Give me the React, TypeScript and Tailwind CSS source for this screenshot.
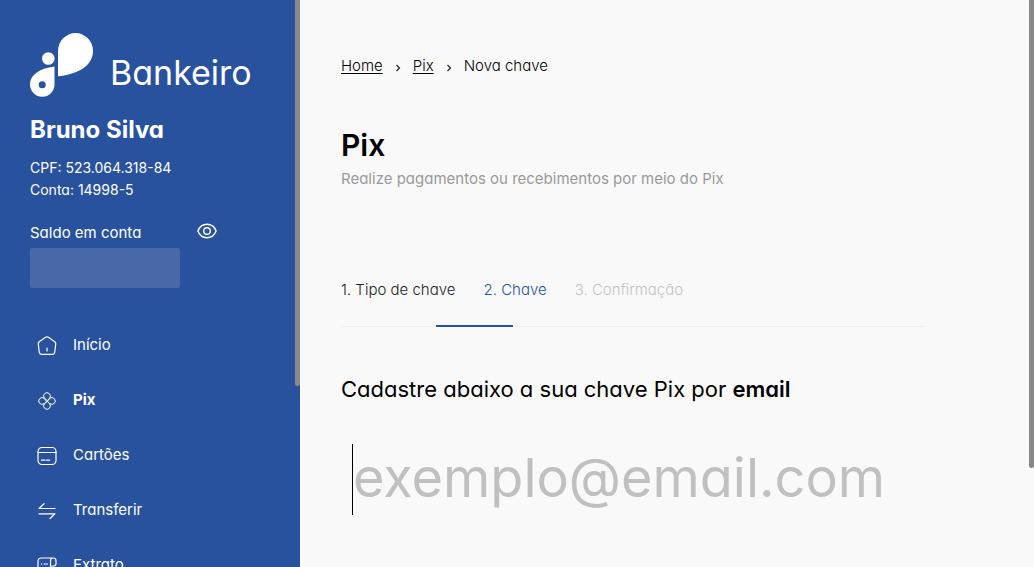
import type { ReactNode } from "react";

function Logo() {
  return (
    <svg width="64" height="66" viewBox="0 0 64 66" fill="#fff" aria-hidden="true">
      <path d="M28 44.300V19A17.500 18 0 0 1 63 19C63 33.500 48 42.500 28 44.300Z" />
      <circle cx="18.300" cy="26.500" r="6.300" />
      <path
        fillRule="evenodd"
        d="M24.500 34.500C9 36.500 0 43 0 52.500A12.250 12.250 0 0 0 24.500 52.500ZM12.200 49.200A3.500 3.500 0 1 1 12.200 56.200A3.500 3.500 0 1 1 12.200 49.200Z"
      />
    </svg>
  );
}

function Icon({ children }: { children: ReactNode }) {
  return (
    <svg
      width="20"
      height="20"
      viewBox="0 0 20 20"
      fill="none"
      stroke="#fff"
      strokeWidth="1.2"
      strokeLinecap="round"
      strokeLinejoin="round"
      className="shrink-0"
      aria-hidden="true"
    >
      {children}
    </svg>
  );
}

const menu = [
  {
    label: "Início",
    active: false,
    icon: (
      <>
        <path d="M8.600 1.300Q10 .4 11.400 1.300L17.800 5.800Q19 6.800 18.700 8.200L17.700 16.300Q17.200 18.400 15.100 18.400H4.900Q2.800 18.400 2.300 16.300L1.300 8.200Q1 6.800 2.200 5.800Z" />
        <path d="M10 12v3" />
      </>
    ),
  },
  {
    label: "Pix",
    active: true,
    icon: (
      <g strokeWidth="1">
        <path d="M10 9.300 7.300 7.200A3.400 3.400 0 1 1 12.700 7.200Z" />
        <path d="M10 10.700 7.300 12.800A3.400 3.400 0 1 0 12.700 12.800Z" />
        <path d="M9.300 10 7.200 7.300A3.400 3.400 0 1 0 7.200 12.700Z" />
        <path d="M10.700 10 12.800 7.300A3.400 3.400 0 1 1 12.800 12.700Z" />
      </g>
    ),
  },
  {
    label: "Cartões",
    active: false,
    icon: (
      <>
        <rect x="1" y="1.500" width="18" height="17" rx="4" />
        <path d="M1 6.500h18M4.500 14.200h3.500M9.500 14.200h3" />
      </>
    ),
  },
  {
    label: "Transferir",
    active: false,
    icon: <path d="M18 7.500H2L7 2.700M2 12.800h16L13 17.500" />,
  },
  {
    label: "Extrato",
    active: false,
    icon: (
      <>
        <path d="M13.500 18.500H5Q1 18.500 1 14.500V5.500Q1 2 4.500 2H16.500Q19 2 19 5V7.500Q19 10 16.500 10H13.500V4.500Q13.500 2 16 2M13.500 10v8.500" />
        <path d="M4.300 8h.5M7 8h3.500M4.300 11.500h.5M7 11.500h3.500" />
      </>
    ),
  },
];

function Sidebar() {
  return (
    <aside className="relative w-[300px] shrink-0 overflow-hidden bg-[#28529e] text-white">
      <div className="px-[30px] pt-8">
        <a href="#inicio" className="flex h-[66px] items-end gap-4" aria-label="Bankeiro">
          <Logo />
          <span className="text-[34px] leading-[50px]">Bankeiro</span>
        </a>
        <h2 className="mt-4 text-2xl leading-8 font-bold">Bruno Silva</h2>
        <p className="mt-[11px] text-sm leading-[22px]">CPF: 523.064.318-84</p>
        <p className="text-sm leading-[22px]">Conta: 14998-5</p>
        <div className="mt-5 flex items-start">
          <span className="w-[167px] text-[15px] leading-6">Saldo em conta</span>
          <button type="button" aria-label="Mostrar saldo">
            <svg width="20" height="20" viewBox="0 0 20 20" fill="none" stroke="#fff" strokeWidth="1.400" aria-hidden="true">
              <path d="M.9 10C2.600 5.600 6 3.300 10 3.300S17.400 5.600 19.100 10C17.400 14.400 14 16.700 10 16.700S2.600 14.400.9 10Z" />
              <circle cx="10" cy="10" r="3.300" />
            </svg>
          </button>
        </div>
        <div className="mt-[3px] h-10 w-[150px] rounded-xs bg-[#4868a7]" />
      </div>
      <nav className="mt-[30px] pl-[37px]">
        {menu.map((item) => (
          <a
            key={item.label}
            href={"#" + item.label.toLowerCase()}
            className={
              item.active
                ? "flex h-[55px] items-center gap-4 text-[15px] font-bold"
                : "flex h-[55px] items-center gap-4 text-[15px]"
            }
          >
            <Icon>{item.icon}</Icon>
            {item.label}
          </a>
        ))}
      </nav>
      <div className="absolute top-0 right-0 h-[386px] w-[5px] rounded-b-full bg-[#888]" />
    </aside>
  );
}

function Separator() {
  return (
    <svg width="6" height="8" viewBox="0 0 6 8" fill="none" stroke="#222" strokeWidth="1.200" className="mt-1" aria-hidden="true">
      <path d="M1.500 1l3 3-3 3" />
    </svg>
  );
}

export default function App() {
  return (
    <div className="relative flex h-screen overflow-hidden bg-[#f9f9f9] font-[Inter,sans-serif] text-black [font-feature-settings:'cv11']">
      <Sidebar />
      <main className="min-w-0 flex-1 pr-[109px] pl-[41px]">
        <nav aria-label="Trilha" className="flex items-center gap-3 pt-14 text-[15px] leading-5 font-light">
          <a href="#home" className="underline underline-offset-2">Home</a>
          <Separator />
          <a href="#pix" className="underline underline-offset-2">Pix</a>
          <Separator />
          <span>Nova chave</span>
        </nav>
        <h1 className="mt-[47px] text-3xl leading-[44px] font-semibold">Pix</h1>
        <p className="text-[15px] leading-6 text-[#999]">
          Realize pagamentos ou recebimentos por meio do Pix
        </p>
        <div className="mt-[89px] border-b border-[#efefef]">
          <ol className="flex gap-7 text-[15px] leading-5 font-light whitespace-nowrap">
            <li className="text-[#222]">1. Tipo de chave</li>
            <li className="text-[#28529e]">2. Chave</li>
            <li className="text-[#c4c4c4]">3. Confirmação</li>
          </ol>
          <div className="mt-[25px] -mb-px ml-[95px] h-[2px] w-[77px] bg-[#28529e]" />
        </div>
        <label htmlFor="email" className="mt-[46px] block text-[22px] leading-8 whitespace-nowrap">
          Cadastre abaixo a sua chave Pix por <strong className="font-semibold">email</strong>
        </label>
        <div className="mt-[39px] ml-[11px] border-l border-black">
          <input
            id="email"
            type="email"
            placeholder="exemplo@email.com"
            className="block h-[71px] w-full bg-transparent pb-1 text-[54px] outline-none placeholder:text-[#c0c0c0]"
          />
        </div>
      </main>
      <div className="absolute top-0 right-0 h-[468px] w-[5px] rounded-b-full bg-[#888]" />
    </div>
  );
}
